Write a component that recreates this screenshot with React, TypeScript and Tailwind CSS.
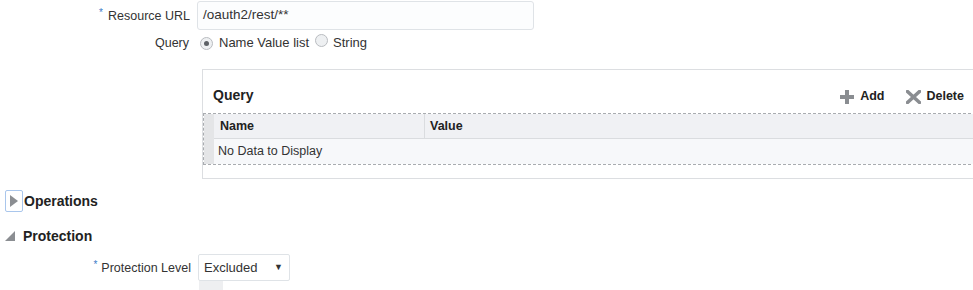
import React from "react";

function Radio({ checked }: { checked?: boolean }) {
  return (
    <span className="inline-flex h-[13px] w-[13px] items-center justify-center rounded-full border border-[#b9bcc0] bg-[#eef0f2]">
      {checked && <span className="h-[5px] w-[5px] rounded-full bg-[#5d6166]" />}
    </span>
  );
}

export default function App() {
  return (
    <div className="relative h-[290px] w-[973px] overflow-hidden bg-white text-[13px] text-[#333] [font-family:'Liberation_Sans',Arial,sans-serif]">
      {/* Resource URL */}
      <div className="mt-[1px] flex h-[29px] items-center">
        <div className="w-[190px] text-right">
          <span className="relative top-[-4px] mr-[5px] text-[10px] text-[#3a7bc8]">*</span>
          <span className="text-[12.5px] text-[#333]">Resource URL</span>
        </div>
        <div className="ml-[7px] flex h-[29px] w-[337px] items-center rounded-[3px] border border-[#dfe3e7] bg-[#fcfdfe] pl-[5px] text-[13.5px] text-[#333]">
          /oauth2/rest/**
        </div>
      </div>

      {/* Query radios */}
      <div className="mt-[3px] flex h-[20px] items-center">
        <div className="w-[189px] text-right text-[12.5px] text-[#333]">Query</div>
        <div className="ml-[11px] flex items-center">
          <Radio checked />
          <span className="ml-[6px]">Name Value list</span>
          <span className="ml-[6px]"><Radio /></span>
          <span className="ml-[5px]">String</span>
        </div>
      </div>

      {/* Query panel */}
      <div className="ml-[202px] mt-[16px] h-[110px] w-[780px] border border-[#dcdee1] bg-white">
        <div className="flex h-[43px] items-end pb-[7px]">
          <div className="ml-[10px] text-[14px] font-bold text-[#222]">Query</div>
          <div className="ml-auto mr-[17px] flex items-center text-[12.5px]">
            <span className="flex items-center">
              <svg width="14" height="14" viewBox="0 0 14 14">
                <rect x="5" y="0" width="4" height="14" fill="#8a8d91" />
                <rect x="0" y="5" width="14" height="4" fill="#8a8d91" />
              </svg>
              <span className="ml-[6px] font-bold text-[#222]">Add</span>
            </span>
            <span className="ml-[22px] flex items-center">
              <svg width="15" height="14" viewBox="0 0 15 14">
                <path d="M1.5 1.5 L13.5 12.5 M13.5 1.5 L1.5 12.5" stroke="#8a8d91" strokeWidth="3.5" strokeLinecap="square" />
              </svg>
              <span className="ml-[5px] font-bold text-[#222]">Delete</span>
            </span>
          </div>
        </div>
        <div className="border-y border-l border-dashed border-[#a9acb0]">
          <div className="flex">
            <div className="w-[10px] bg-[#e4e5e7]" />
            <div className="flex-1">
              <div className="flex h-[25px] items-center border-b border-[#dadcdf] bg-[#f0f1f4] text-[12.5px] font-bold text-[#222]">
                <div className="flex h-full w-[211px] items-center border-r border-[#dadcdf] pl-[6px]">Name</div>
                <div className="pl-[5px]">Value</div>
              </div>
              <div className="flex h-[25px] items-center bg-[#f7f8fa] pl-[4px] text-[12.5px] text-[#333]">No Data to Display</div>
            </div>
          </div>
        </div>
      </div>

      {/* Operations */}
      <div className="mt-[11px] flex h-[22px] items-center">
        <div className="ml-[5px] flex h-[22px] w-[18px] items-center justify-center rounded-[2px] border border-[#a9c6ec]">
          <svg width="8" height="12" viewBox="0 0 8 12">
            <path d="M0 0 L8 6 L0 12 Z" fill="#8b8e92" />
          </svg>
        </div>
        <span className="ml-[1px] text-[14px] font-bold text-[#222]">Operations</span>
      </div>

      {/* Protection */}
      <div className="mt-[13px] flex h-[22px] items-center">
        <div className="ml-[5px] flex w-[18px] items-center">
          <svg width="10" height="10" viewBox="0 0 10 10">
            <path d="M10 0 L10 10 L0 10 Z" fill="#8b8e92" />
          </svg>
        </div>
        <span className="text-[14px] font-bold text-[#222]">Protection</span>
      </div>

      {/* Protection Level */}
      <div className="mt-[7px] flex h-[27px] items-center">
        <div className="w-[191px] text-right">
          <span className="relative top-[-4px] mr-[4px] text-[10px] text-[#3a7bc8]">*</span>
          <span className="text-[12.5px]">Protection Level</span>
        </div>
        <div className="ml-[7px] flex h-[27px] w-[92px] items-center rounded-[2px] border border-[#dfe3e7] bg-white pl-[5px] pr-[6px]">
          <span>Excluded</span>
          <span className="ml-auto text-[9px] text-[#333]">▼</span>
        </div>
      </div>
      <div className="ml-[199px] h-[12px] w-[24px] bg-[#eeeff1]" />
    </div>
  );
}
